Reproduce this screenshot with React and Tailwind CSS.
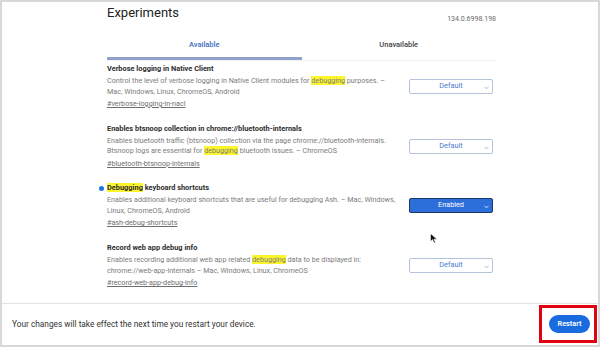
import React from 'react';

const flags = [
  {
    title: 'Verbose logging in Native Client',
    lines: [
      'Control the level of verbose logging in Native Client modules for *debugging* purposes. –',
      'Mac, Windows, Linux, ChromeOS, Android',
    ],
    link: '#verbose-logging-in-nacl',
    value: 'Default',
  },
  {
    title: 'Enables btsnoop collection in chrome://bluetooth-internals',
    lines: [
      'Enables bluetooth traffic (btsnoop) collection via the page chrome://bluetooth-internals.',
      'Btsnoop logs are essential for *debugging* bluetooth issues. – ChromeOS',
    ],
    link: '#bluetooth-btsnoop-internals',
    value: 'Default',
  },
  {
    title: '*Debugging* keyboard shortcuts',
    lines: [
      'Enables additional keyboard shortcuts that are useful for debugging Ash. – Mac, Windows,',
      'Linux, ChromeOS, Android',
    ],
    link: '#ash-debug-shortcuts',
    value: 'Enabled',
    changed: true,
  },
  {
    title: 'Record web app debug info',
    lines: [
      'Enables recording additional web app related *debugging* data to be displayed in:',
      'chrome://web-app-internals – Mac, Windows, Linux, ChromeOS',
    ],
    link: '#record-web-app-debug-info',
    value: 'Default',
  },
];

// words wrapped in *stars* get the search highlight
const marked = (text) =>
  text.split('*').map((part, i) =>
    i % 2 ? (
      <span key={i} className="bg-[#fbf52c]">{part}</span>
    ) : (
      <React.Fragment key={i}>{part}</React.Fragment>
    )
  );

const Chevron = ({ color }) => (
  <svg width="5" height="4" viewBox="0 0 5 4" className="absolute right-[3px] top-[6px]">
    <path d="M0.5 0.8 L2.5 2.8 L4.5 0.8" fill="none" stroke={color} strokeWidth="0.8" />
  </svg>
);

const FlagSelect = ({ value }) => {
  const on = value === 'Enabled';
  return (
    <div
      className={
        on
          ? 'relative mr-[3px] w-[84px] h-[15px] shrink-0 rounded-[2px] border border-[#1d3763] bg-[#2c6fdb] text-white flex items-center justify-center text-[7.3px]'
          : 'relative mr-[3px] w-[84px] h-[15px] shrink-0 rounded-[2px] border border-[#b3c3db] bg-white text-[#4a7bd0] flex items-center justify-center text-[7.3px]'
      }
    >
      <span>{value}</span>
      <Chevron color={on ? '#ffffff' : '#8ea3c6'} />
    </div>
  );
};

const Flag = ({ flag }) => (
  <div className="h-[59.7px] flex">
    <div className="h-[45px] w-full flex items-center justify-between">
      <div>
        <div className="flex items-center leading-[10px] text-[7.4px] font-bold text-[#2e2e2e]">
          {flag.changed && <span className="-ml-[8px] mr-[3px] w-[5px] h-[5px] rounded-full bg-[#1a73e8]" />}
          <span>{marked(flag.title)}</span>
        </div>
        <div className="mt-[2px] text-[7.2px] leading-[10.5px] text-[#7c7c7c] whitespace-nowrap">
          {flag.lines.map((l, i) => (
            <div key={i}>{marked(l)}</div>
          ))}
        </div>
        <div className="mt-[2px] text-[7.2px] leading-[10px] text-[#6f6f6f] underline">{flag.link}</div>
      </div>
      <FlagSelect value={flag.value} />
    </div>
  </div>
);

export default function App() {
  return (
    <div className="relative w-[600px] h-[347px] border-2 border-[#d8d8d8] bg-white flex flex-col font-['Roboto','Liberation_Sans',sans-serif] overflow-hidden">
      <main className="flex-1 pl-[105px] pr-[102px]">
        <div className="h-[28px] flex justify-between">
          <h1 className="pt-[3px] text-[13px] leading-[16px] text-[#222]">Experiments</h1>
          <span className="pt-[12px] text-[7px] leading-[10px] text-[#6b6b6b]">134.0.6998.198</span>
        </div>

        <div className="flex border-b border-[#f2f2f2]">
          <div className="flex-1 h-[30px] pt-[3px] flex items-center justify-center border-b-[3px] border-[#8fa2cb] text-[7.5px] font-medium text-[#3c6ec2]">
            Available
          </div>
          <div className="flex-1 h-[30px] pt-[3px] flex items-center justify-center border-b-[3px] border-transparent text-[7.5px] font-medium text-[#444]">
            Unavailable
          </div>
        </div>

        <div className="mt-[3px]">
          {flags.map((f) => (
            <Flag key={f.link} flag={f} />
          ))}
        </div>
      </main>

      <footer className="h-[43px] border-t border-[#e4e4e4] flex items-center justify-between pl-[10px] pr-[1px]">
        <p className="text-[8.3px] text-[#333]">Your changes will take effect the next time you restart your device.</p>
        <div className="w-[58px] h-[38px] border-[3px] border-[#e0000f] pl-[7px] pr-[4px] flex items-center">
          <button className="w-[41px] h-[18px] rounded-full bg-[#1b6be0] text-white text-[7.3px] font-semibold">
            Restart
          </button>
        </div>
      </footer>

      <svg width="8" height="11" viewBox="0 0 8 11" className="absolute left-[428px] top-[231px]">
        <path d="M0.5 0.5 L0.5 8.5 L2.6 6.6 L4 10 L5.4 9.4 L4 6.2 L7 6.2 Z" fill="#111" stroke="#fff" strokeWidth="0.6" />
      </svg>
    </div>
  );
}
